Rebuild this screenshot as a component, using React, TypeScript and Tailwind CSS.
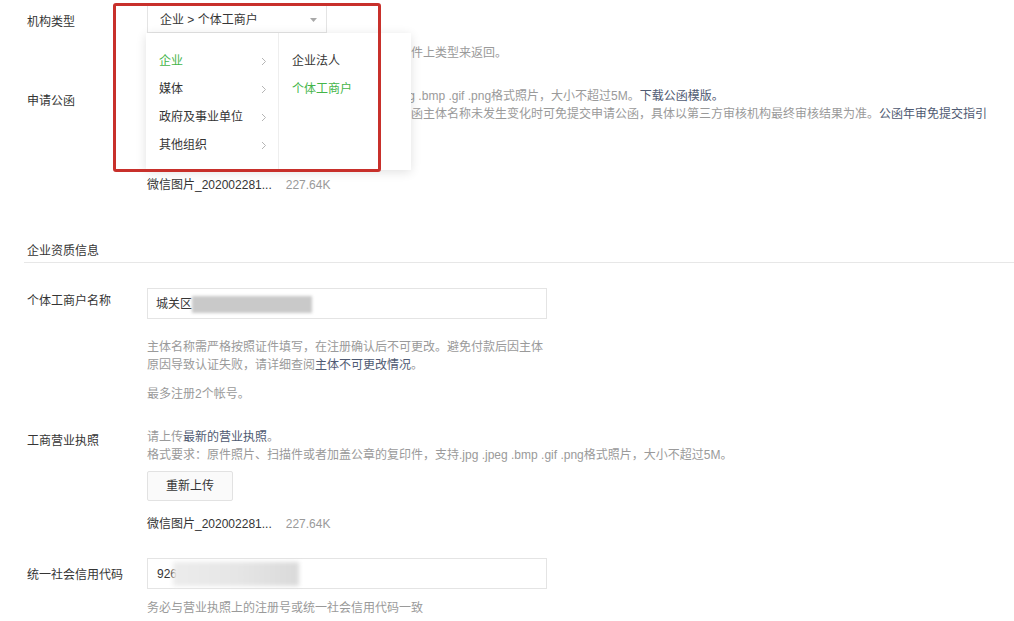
import React from 'react';

const leftItems = [
  { id: 1, text: '企业', active: true },
  { id: 2, text: '媒体', active: false },
  { id: 3, text: '政府及事业单位', active: false },
  { id: 4, text: '其他组织', active: false },
];

const rightItems = [
  { id: 1, text: '企业法人', active: false },
  { id: 2, text: '个体工商户', active: true },
];

const Arrow = () => (
  <svg width="6" height="9" viewBox="0 0 6 9" className="text-[#b5b5b5]">
    <path d="M1 1l3.5 3.5L1 8" fill="none" stroke="currentColor" strokeWidth="1" />
  </svg>
);

const FileRow = () => (
  <div className="mt-[14px] flex items-center gap-[14px] leading-[18px]">
    <span className="text-[#353535]">微信图片_202002281...</span>
    <span className="text-[#9a9a9a]">227.64K</span>
  </div>
);

const UploadButton = ({ top }: { top: string }) => (
  <button className={`${top} h-[30px] px-[18px] border border-[#e2e2e2] bg-[#fafafa] text-[#353535] rounded-[2px] outline-none`}>
    重新上传
  </button>
);

const App: React.FC = () => (
  <div className="relative min-h-[621px] bg-white pt-[5px] text-[12px] text-[#353535] font-['Liberation_Sans','Noto_Sans_CJK_SC',sans-serif] overflow-hidden">
    {/* 机构类型 */}
    <div className="flex pl-[27px]">
      <div className="w-[120px] shrink-0 pt-[8px] leading-[18px]">机构类型</div>
      <div className="flex flex-col items-start">
        <div className="relative">
          <div className="w-[180px] h-[28px] border border-[#e4e4e4] flex items-center justify-between pl-[12px] pr-[9px] pt-[2px] bg-white">
            <span>企业 &gt; 个体工商户</span>
            <svg width="7" height="4" viewBox="0 0 7 4">
              <path d="M0 0h7L3.5 4z" fill="#a8a8a8" />
            </svg>
          </div>
          <div className="absolute left-[-1px] top-[28px] z-10 w-[265px] h-[137px] bg-white flex shadow-[0_2px_10px_rgba(0,0,0,0.12)]">
            <div className="w-[133px] border-r border-[#eeeeee] pt-[14px]">
              {leftItems.map(res => (
                <div
                  key={res.id}
                  className={`h-[28px] flex items-center justify-between pl-[13px] pr-[11px] ${res.active ? 'text-[#44b549]' : 'text-[#353535]'}`}
                >
                  <span>{res.text}</span>
                  <Arrow />
                </div>
              ))}
            </div>
            <div className="flex-1 pt-[14px]">
              {rightItems.map(res => (
                <div
                  key={res.id}
                  className={`h-[28px] flex items-center pl-[13px] ${res.active ? 'text-[#44b549]' : 'text-[#353535]'}`}
                >
                  {res.text}
                </div>
              ))}
            </div>
          </div>
        </div>
        <div className="mt-[11px] leading-[18px] text-[#9a9a9a]">
          请根据情况选择机构类型，需要按照营业执照等证件上类型来返回。
        </div>
      </div>
    </div>

    {/* 申请公函 */}
    <div className="flex pl-[27px] mt-[25px]">
      <div className="w-[120px] shrink-0 pt-[5px] leading-[18px]">申请公函</div>
      <div className="flex flex-col items-start leading-[18px] text-[#9a9a9a] whitespace-nowrap">
        <div>
          请上传申请公函原件照片或扫描件，支持 .jpg .jpeg .bmp .gif .png格式照片，大小不超过5M。
          <span className="text-[#4f5a72]">下载公函模版。</span>
        </div>
        <div>
          认证帐号年审时，若与上一次认证时提交的申请公函主体名称未发生变化时可免提交申请公函，具体以第三方审核机构最终审核结果为准。
          <span className="text-[#4f5a72]">公函年审免提交指引</span>
        </div>
        <UploadButton top="mt-[9px]" />
        <FileRow />
      </div>
    </div>

    {/* 企业资质信息 */}
    <div className="ml-[24px] mt-[48px] pl-[3px] pb-[2px] border-b border-[#e7e7e7] leading-[18px]">
      企业资质信息
    </div>

    {/* 个体工商户名称 */}
    <div className="flex pl-[27px] mt-[25px]">
      <div className="w-[120px] shrink-0 pt-[4px] leading-[18px]">个体工商户名称</div>
      <div className="flex flex-col items-start">
        <div className="w-[400px] h-[31px] border border-[#e4e4e4] flex items-center pl-[8px] pt-[1px]">
          <span>城关区</span>
          <span className="inline-block w-[120px] h-[17px] bg-[#c9c9c9] blur-[1.5px]" />
        </div>
        <div className="mt-[19px] w-[400px] leading-[18px] text-[#9a9a9a]">
          主体名称需严格按照证件填写，在注册确认后不可更改。避免付款后因主体原因导致认证失败，请详细查阅
          <span className="text-[#4f5a72]">主体不可更改情况</span>。
        </div>
        <div className="mt-[11px] leading-[18px] text-[#9a9a9a]">最多注册2个帐号。</div>
      </div>
    </div>

    {/* 工商营业执照 */}
    <div className="flex pl-[27px] mt-[25px]">
      <div className="w-[120px] shrink-0 pt-[4px] leading-[18px]">工商营业执照</div>
      <div className="flex flex-col items-start leading-[18px] text-[#9a9a9a]">
        <div>
          请上传<span className="text-[#4f5a72]">最新的营业执照</span>。
        </div>
        <div>格式要求：原件照片、扫描件或者加盖公章的复印件，支持.jpg .jpeg .bmp .gif .png格式照片，大小不超过5M。</div>
        <UploadButton top="mt-[7px]" />
        <FileRow />
      </div>
    </div>

    {/* 统一社会信用代码 */}
    <div className="flex pl-[27px] mt-[25px]">
      <div className="w-[120px] shrink-0 pt-[8px] leading-[18px]">统一社会信用代码</div>
      <div className="flex flex-col items-start">
        <div className="w-[400px] h-[31px] border border-[#e4e4e4] flex items-center pl-[9px] pt-[1px]">
          <span>926</span>
          <span className="inline-block -ml-[4px] w-[126px] h-[24px] bg-gradient-to-r from-[#ececec] via-[#e6e6e6] to-[#dadada] blur-[2px]" />
        </div>
        <div className="mt-[10px] leading-[18px] text-[#9a9a9a]">务必与营业执照上的注册号或统一社会信用代码一致</div>
      </div>
    </div>

    {/* annotation box */}
    <div className="absolute left-[113px] top-[3px] z-20 w-[268px] h-[169px] border-[3px] border-[#c8302b] rounded-[3px] pointer-events-none" />
  </div>
);

export default App;
